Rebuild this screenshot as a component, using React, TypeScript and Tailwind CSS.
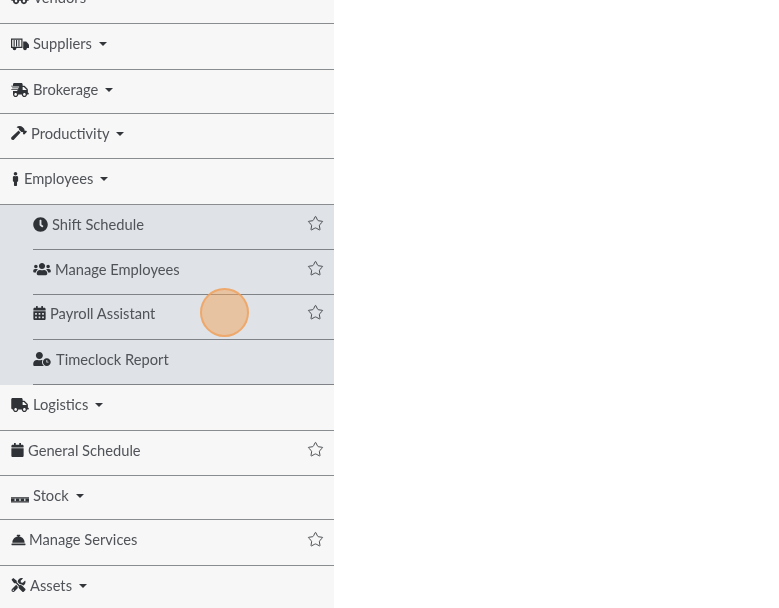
import React from "react";
import {
  FaTruckPickup, FaShippingFast, FaHammer, FaMale, FaClock, FaUsers, FaCalendarAlt,
  FaUserClock, FaTruck, FaCalendar, FaConciergeBell, FaTools,
} from "react-icons/fa";
import { Star } from "lucide-react";

function BoxTruck({ className }: { className?: string }) {
  return (
    <svg viewBox="0 0 18 14" className={className} fill="currentColor">
      <path d="M0 1.5h11.5v9.5H0zM1.2 2.7v7.1h9.1V2.7z" fillRule="evenodd" />
      <path d="M2.6 3h1.1v6.6H2.6zM5 3h1.1v6.6H5zM7.4 3h1.1v6.6H7.4z" />
      <path d="M12.2 4.5h3l2.8 3v3.5h-5.8z" />
      <circle cx="3.5" cy="11.5" r="1.8" />
      <circle cx="14" cy="11.5" r="1.8" />
    </svg>
  );
}

function FlatPallet({ className }: { className?: string }) {
  return (
    <svg viewBox="0 0 18 14" className={className} fill="currentColor">
      <path d="M0 8.2h18v1.4H0zM0 12.2h18v1.4H0z" />
      <path d="M0 9.6h3.6v2.6H0zM4.8 9.6h3.6v2.6H4.8zM9.6 9.6h3.6v2.6H9.6zM14.4 9.6H18v2.6h-3.6z" />
    </svg>
  );
}

type Row = {
  label: string;
  Icon: React.ComponentType<{ className?: string }>;
  icon: string;
  h: string;
  pb: string;
  caret?: boolean;
  star?: boolean;
};

const top: Row[] = [
  { label: "Vendors", Icon: FaTruckPickup, icon: "w-[18px] h-[14px] mr-[4px]", h: "h-[46px]", pb: "pb-[6px]", caret: true },
  { label: "Suppliers", Icon: BoxTruck, icon: "w-[18px] h-[14px] mr-[4px]", h: "h-[46px]", pb: "pb-[6px]", caret: true },
  { label: "Brokerage", Icon: FaShippingFast, icon: "w-[18px] h-[14px] mr-[4px]", h: "h-[44px]", pb: "pb-[4px]", caret: true },
  { label: "Productivity", Icon: FaHammer, icon: "w-[16px] h-[14px] mr-[4px]", h: "h-[45px]", pb: "pb-[6px]", caret: true },
  { label: "Employees", Icon: FaMale, icon: "w-[9px] h-[14px] mr-[4px]", h: "h-[46px]", pb: "pb-[6px]", caret: true },
];

const sub: Row[] = [
  { label: "Shift Schedule", Icon: FaClock, icon: "w-[15px] h-[15px] mr-[4px]", h: "h-[45px]", pb: "pb-[6px]", star: true },
  { label: "Manage Employees", Icon: FaUsers, icon: "w-[18px] h-[14px] mr-[4px]", h: "h-[45px]", pb: "pb-[6px]", star: true },
  { label: "Payroll Assistant", Icon: FaCalendarAlt, icon: "w-[13px] h-[14px] mr-[4px]", h: "h-[45px]", pb: "pb-[8px]", star: true },
  { label: "Timeclock Report", Icon: FaUserClock, icon: "w-[18px] h-[14px] mr-[5px]", h: "h-[45px]", pb: "pb-[6px]" },
];

const bottom: Row[] = [
  { label: "Logistics", Icon: FaTruck, icon: "w-[18px] h-[14px] mr-[4px]", h: "h-[46px]", pb: "pb-[6px]", caret: true },
  { label: "General Schedule", Icon: FaCalendar, icon: "w-[13px] h-[14px] mr-[4px]", h: "h-[45px]", pb: "pb-[6px]", star: true },
  { label: "Stock", Icon: FlatPallet, icon: "w-[18px] h-[14px] mr-[4px]", h: "h-[44px]", pb: "pb-[4px]", caret: true },
  { label: "Manage Services", Icon: FaConciergeBell, icon: "w-[15px] h-[14px] mr-[3px]", h: "h-[46px]", pb: "pb-[6px]", star: true },
  { label: "Assets", Icon: FaTools, icon: "w-[15px] h-[14px] mr-[4px]", h: "h-[45px]", pb: "pb-[6px]", caret: true },
];

function Content({ r }: { r: Row }) {
  const { Icon } = r;
  return (
    <>
      <Icon className={`${r.icon} shrink-0 text-[#2f3236]`} />
      <span className="text-[14.7px] leading-none text-[#505358]">{r.label}</span>
      {r.caret && (
        <span className="ml-[7px] mt-[1px] w-0 h-0 border-x-[4px] border-x-transparent border-t-[4px] border-t-[#33363a]" />
      )}
      {r.star && <Star strokeWidth={1.3} className="ml-auto mr-[10px] -mt-[1px] w-[17px] h-[17px] text-[#3f4246]" />}
    </>
  );
}

export default function App() {
  return (
    <div className="h-[608px] w-[779px] overflow-hidden bg-white font-['Lato','Liberation_Sans',sans-serif]">
      <nav className="relative w-[334px] -mt-[22px] bg-[#f7f7f7] blur-[0.4px]">
        {top.map((r) => (
          <div key={r.label} className={`${r.h} ${r.pb} flex items-center pl-[11px] border-b border-[#8a8d90]`}>
            <Content r={r} />
          </div>
        ))}
        <div className="bg-[#dfe2e6] pl-[33px]">
          {sub.map((r) => (
            <div key={r.label} className={`${r.h} ${r.pb} flex items-center border-b border-[#7f8286]`}>
              <Content r={r} />
            </div>
          ))}
        </div>
        {bottom.map((r) => (
          <div key={r.label} className={`${r.h} ${r.pb} flex items-center pl-[11px] border-b border-[#8a8d90]`}>
            <Content r={r} />
          </div>
        ))}
      </nav>
      <div className="absolute left-[200px] top-[288px] w-[49px] h-[49px] rounded-full bg-[#f0a35e]/50 border-2 border-[#f0a35e]/80" />
    </div>
  );
}
